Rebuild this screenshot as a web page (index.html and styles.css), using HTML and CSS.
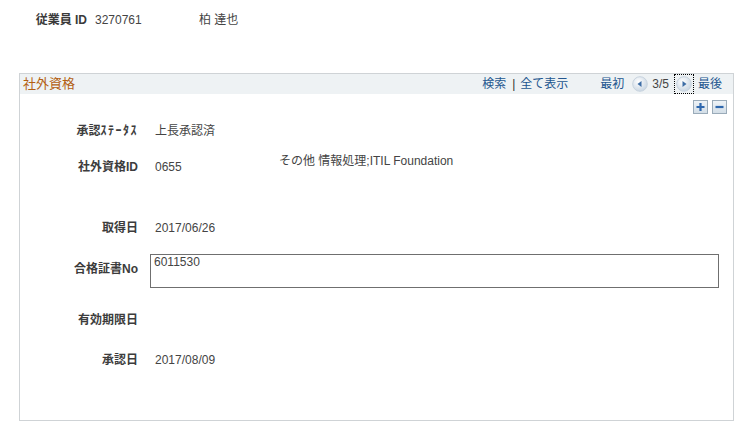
FILE: index.html
```html
<!DOCTYPE html>
<html lang="ja">
<head>
<meta charset="utf-8">
<title>社外資格</title>
<link rel="stylesheet" href="styles.css">
</head>
<body>
<div class="emp">
  <span class="emp-label">従業員 ID</span>
  <span class="emp-id">3270761</span>
  <span class="emp-name">柏 達也</span>
</div>

<div class="box">
  <div class="bar">
    <span class="title">社外資格</span>
    <div class="nav">
      <a class="lnk">検索</a>
      <span class="sep">|</span>
      <a class="lnk">全て表示</a>
      <a class="lnk first">最初</a>
      <span class="circ prev"><svg width="16" height="16" viewBox="0 0 16 16"><defs><radialGradient id="g1" cx="0.4" cy="0.35" r="0.75"><stop offset="0" stop-color="#ffffff"/><stop offset="1" stop-color="#c3d1df"/></radialGradient></defs><circle cx="8" cy="8" r="7.3" fill="url(#g1)" stroke="#c8d3de"/><path d="M5.5 8 L9.5 5 L9.5 11 Z" fill="#3d6da5"/></svg></span>
      <span class="count">3/5</span>
      <span class="circ next"><svg width="16" height="16" viewBox="0 0 16 16"><defs><radialGradient id="g2" cx="0.4" cy="0.35" r="0.75"><stop offset="0" stop-color="#ffffff"/><stop offset="1" stop-color="#c3d1df"/></radialGradient></defs><circle cx="8" cy="8" r="7.3" fill="url(#g2)" stroke="#c8d3de"/><path d="M10.5 8 L6.5 5 L6.5 11 Z" fill="#3d6da5"/></svg></span>
      <a class="lnk last">最後</a>
    </div>
  </div>

  <div class="tools">
    <span class="btn"><svg width="15" height="14" viewBox="0 0 15 14"><path d="M7.5 3 V11 M3.5 7 H11.5" stroke="#2e67ad" stroke-width="2.2"/></svg></span>
    <span class="btn"><svg width="15" height="14" viewBox="0 0 15 14"><path d="M3.5 7 H11.5" stroke="#2e67ad" stroke-width="2.2"/></svg></span>
  </div>

  <div class="row r1">
    <span class="lab">承認<span class="kana">ｽﾃｰﾀｽ</span></span>
    <span class="val">上長承認済</span>
  </div>
  <div class="row r2">
    <span class="lab">社外資格ID</span>
    <span class="val v2">0655</span>
    <span class="desc">その他 情報処理;ITIL Foundation</span>
  </div>
  <div class="row r3">
    <span class="lab">取得日</span>
    <span class="val">2017/06/26</span>
  </div>
  <div class="row r4">
    <span class="lab">合格証書No</span>
    <div class="input">6011530</div>
  </div>
  <div class="row r5">
    <span class="lab">有効期限日</span>
    <span class="val"></span>
  </div>
  <div class="row r6">
    <span class="lab">承認日</span>
    <span class="val">2017/08/09</span>
  </div>
</div>
</body>
</html>
```

FILE: styles.css
```css
* { box-sizing: border-box; }
html, body { margin: 0; padding: 0; background: #fff; }
body {
  font-family: "Liberation Sans", "Noto Sans CJK JP", sans-serif;
  font-size: 12px;
  color: #444;
  width: 748px;
  height: 434px;
  overflow: hidden;
}

.emp {
  display: flex;
  align-items: center;
  height: 40px;
  line-height: 16px;
}
.emp-label {
  width: 87px;
  text-align: right;
  font-weight: bold;
  color: #3a3a3a;
}
.emp-id { margin-left: 8px; width: 104px; color: #444; }
.emp-name { color: #444; }

.box {
  margin: 33px 0 0 19px;
  width: 715px;
  height: 348px;
  border: 1px solid #cfd3d6;
}

.bar {
  display: flex;
  align-items: center;
  height: 20px;
  background: #eef2f4;
  padding: 0 11px 0 3px;
  line-height: 16px;
}
.title {
  color: #b35f12;
  font-size: 13px;
}
.nav {
  margin-left: auto;
  display: flex;
  align-items: center;
}
.lnk { color: #23568f; cursor: pointer; }
.sep { color: #333; margin: 0 5px 0 6px; }
.first { margin-left: 32px; }
.circ { display: flex; width: 16px; height: 16px; }
.prev { margin-left: 8px; }
.count { margin-left: 4px; color: #444; }
.next {
  margin-left: 6px;
  width: 18px;
  height: 18px;
  align-items: center;
  justify-content: center;
  outline: 1px dotted #000;
}
.last { margin-left: 5px; }

.tools {
  display: flex;
  justify-content: flex-end;
  gap: 4px;
  margin-top: 6px;
  padding-right: 6px;
  height: 14px;
}
.btn {
  display: flex;
  width: 15px;
  height: 14px;
  background: linear-gradient(#eef3f7, #d3dee7);
  border: 1px solid #9aabb9;
}
.btn svg { margin: -1px; }

.row {
  display: grid;
  grid-template-columns: 118px auto 1fr;
  column-gap: 17px;
  align-items: center;
  height: 24px;
  line-height: 18px;
}
.lab {
  text-align: right;
  font-weight: bold;
  color: #3c3c3c;
}
.kana { letter-spacing: 1.5px; }
.val { color: #444; }

.r1 { margin-top: 5px; }
.r2 { margin-top: 9px; align-items: start; }
.r2 .lab, .r2 .v2 { padding-top: 6px; }
.r2 .v2 { width: 107px; }
.desc { color: #444; margin-left: 0; }
.r3 { margin-top: 40px; }
.r4 { margin-top: 14px; height: 34px; align-items: start; grid-template-columns: 118px auto; }
.r4 .lab { padding-top: 6px; }
.input {
  margin-left: -5px;
  width: 569px;
  height: 34px;
  border: 1px solid #6f6f6f;
  padding: 0 3px;
  line-height: 14px;
  color: #444;
}
.r5 { margin-top: 20px; }
.r6 { margin-top: 16px; }
```
